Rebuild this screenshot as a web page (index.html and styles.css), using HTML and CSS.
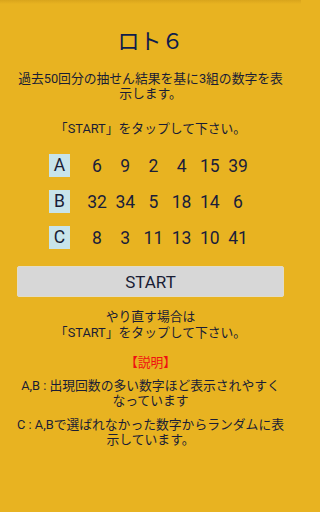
FILE: index.html
```html
<!DOCTYPE html>
<html lang="ja">
<head>
<meta charset="utf-8">
<link rel="stylesheet" href="styles.css">
</head>
<body>
<div class="screen">
  <h1 class="title">ロト６</h1>
  <p class="desc">過去50回分の抽せん結果を基に3組の数字を表<br>示します。</p>
  <p class="hint">「START」をタップして下さい。</p>
  <div class="rows">
    <div class="row">
      <span class="label">A</span>
      <span class="num">6</span><span class="num">9</span><span class="num">2</span><span class="num">4</span><span class="num">15</span><span class="num">39</span>
    </div>
    <div class="row">
      <span class="label">B</span>
      <span class="num">32</span><span class="num">34</span><span class="num">5</span><span class="num">18</span><span class="num">14</span><span class="num">6</span>
    </div>
    <div class="row">
      <span class="label">C</span>
      <span class="num">8</span><span class="num">3</span><span class="num">11</span><span class="num">13</span><span class="num">10</span><span class="num">41</span>
    </div>
  </div>
  <button class="start">START</button>
  <p class="retry">やり直す場合は<br>「START」をタップして下さい。</p>
  <p class="head">【説明】</p>
  <p class="note">A,B : 出現回数の多い数字ほど表示されやすく<br>なっています</p>
  <p class="note">C : A,Bで選ばれなかった数字からランダムに表<br>示しています。</p>
</div>
</body>
</html>
```
FILE: styles.css
```css
html, body {
  margin: 0;
  padding: 0;
}
body {
  width: 301px;
  height: 512px;
  overflow: hidden;
  background: #e8b321;
  font-family: Roboto, "Noto Sans CJK JP", sans-serif;
  color: #1a1d35;
}
.screen {
  height: 512px;
  background: linear-gradient(#d9a51c 0, #e8b321 4px);
  display: flex;
  flex-direction: column;
  align-items: center;
}
.title {
  margin: 29px 0 0;
  font-size: 22px;
  line-height: 26px;
  font-weight: 400;
  color: #0f1c4d;
}
.desc, .hint, .retry, .note, .head {
  margin: 0;
  font-size: 12.8px;
  line-height: 15px;
  text-align: center;
  white-space: nowrap;
}
.desc {
  margin-top: 16px;
}
.hint {
  margin-top: 20px;
}
.rows {
  margin-top: 18px;
  display: flex;
  flex-direction: column;
  gap: 13px;
}
.row {
  display: flex;
  align-items: center;
  font-family: Roboto, "Noto Sans", sans-serif;
  font-size: 17.5px;
}
.label {
  width: 21px;
  height: 23px;
  line-height: 23px;
  text-align: center;
  background: #c8e4ea;
  margin-right: 13px;
  color: #1a1d35;
}
.num {
  width: 28.2px;
  text-align: center;
  color: #1a1d3a;
}
.start {
  margin-top: 17px;
  align-self: stretch;
  margin-left: 17px;
  margin-right: 17px;
  height: 31px;
  border: 1px solid #e2dcc6;
  border-radius: 2px;
  background: #d7d7d7;
  font-family: Roboto, "Noto Sans", sans-serif;
  font-size: 17px;
  color: #1a1d35;
  padding: 0;
}
.retry {
  margin-top: 12px;
  line-height: 16px;
}
.head {
  margin-top: 14px;
  color: #f01010;
}
.note {
  margin-top: 8px;
}
.note + .note {
  margin-top: 9px;
}
```
